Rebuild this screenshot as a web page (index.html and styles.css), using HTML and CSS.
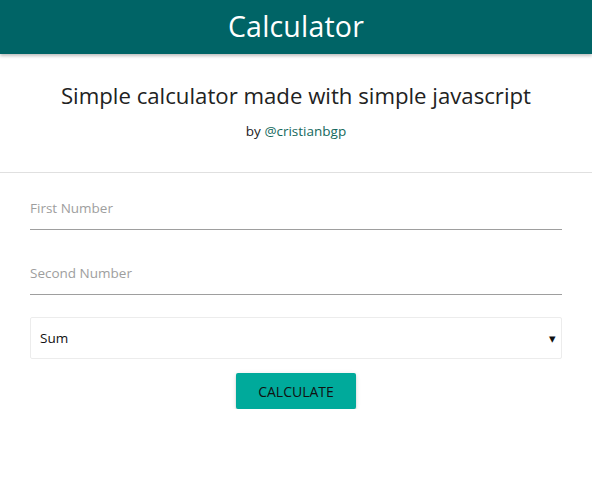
FILE: index.html
```html
<!DOCTYPE html>
<html lang="en">
<head>
<meta charset="utf-8">
<title>Calculator</title>
<link rel="stylesheet" href="styles.css">
</head>
<body>
<header class="topbar">
  <h1 class="brand">Calculator</h1>
</header>
<section class="intro">
  <h2 class="intro-title">Simple calculator made with simple javascript</h2>
  <p class="intro-by">by <a class="intro-link" href="#">@cristianbgp</a></p>
</section>
<form class="calc">
  <div class="field"><input class="field-input" type="text" placeholder="First Number"></div>
  <div class="field"><input class="field-input" type="text" placeholder="Second Number"></div>
  <div class="select">
    <span class="select-value">Sum</span>
    <span class="select-arrow">▾</span>
  </div>
  <div class="actions"><button class="btn" type="button">Calculate</button></div>
</form>
</body>
</html>
```
FILE: styles.css
```css
* { box-sizing: border-box; }
body {
  margin: 0;
  font-family: "Open Sans", "Noto Sans", sans-serif;
  color: #222;
  background: #fff;
}
.topbar {
  height: 54px;
  background: #006466;
  display: flex;
  align-items: center;
  justify-content: center;
  box-shadow: 0 2px 3px rgba(0,0,0,0.25);
}
.brand {
  margin: 0 0 2px;
  font-weight: 400;
  font-size: 28.5px;
  color: #fff;
  letter-spacing: 0.2px;
}
.intro {
  text-align: center;
  padding-top: 27px;
  height: 119px;
  border-bottom: 1px solid #e0e0e0;
}
.intro-title {
  margin: 0;
  font-weight: 400;
  font-size: 22.2px;
  line-height: 30px;
  color: #222;
}
.intro-by {
  margin: 10px 0 0;
  font-size: 13.5px;
  line-height: 20px;
}
.intro-link { color: #14695d; text-decoration: none; }
.calc {
  padding: 0 30px;
  display: flex;
  flex-direction: column;
}
.field {
  height: 57px;
  margin-bottom: 8px;
  display: flex;
  align-items: flex-end;
}
.field-input {
  width: 100%;
  border: 0;
  border-bottom: 1px solid #9e9e9e;
  height: 40px;
  padding: 0 0 3px;
  font: inherit;
  font-size: 13.5px;
  outline: none;
  background: transparent;
}
.field-input::placeholder { color: #9e9e9e; }
.select {
  margin-top: 14px;
  height: 42px;
  border: 1px solid #ececec;
  border-radius: 2px;
  display: flex;
  align-items: center;
  justify-content: space-between;
  padding: 0 5px 0 9px;
  font-size: 13.5px;
  color: #111;
}
.select-arrow { font-size: 13px; }
.actions {
  display: flex;
  justify-content: center;
  margin-top: 14px;
}
.btn {
  width: 120px;
  height: 36px;
  border: 0;
  border-radius: 2px;
  background: #00aa9b;
  color: #111;
  text-transform: uppercase;
  font: inherit;
  font-size: 14px;
  box-shadow: 0 2px 2px rgba(0,0,0,0.14), 0 1px 5px rgba(0,0,0,0.12), 0 3px 1px -2px rgba(0,0,0,0.2);
}
```
